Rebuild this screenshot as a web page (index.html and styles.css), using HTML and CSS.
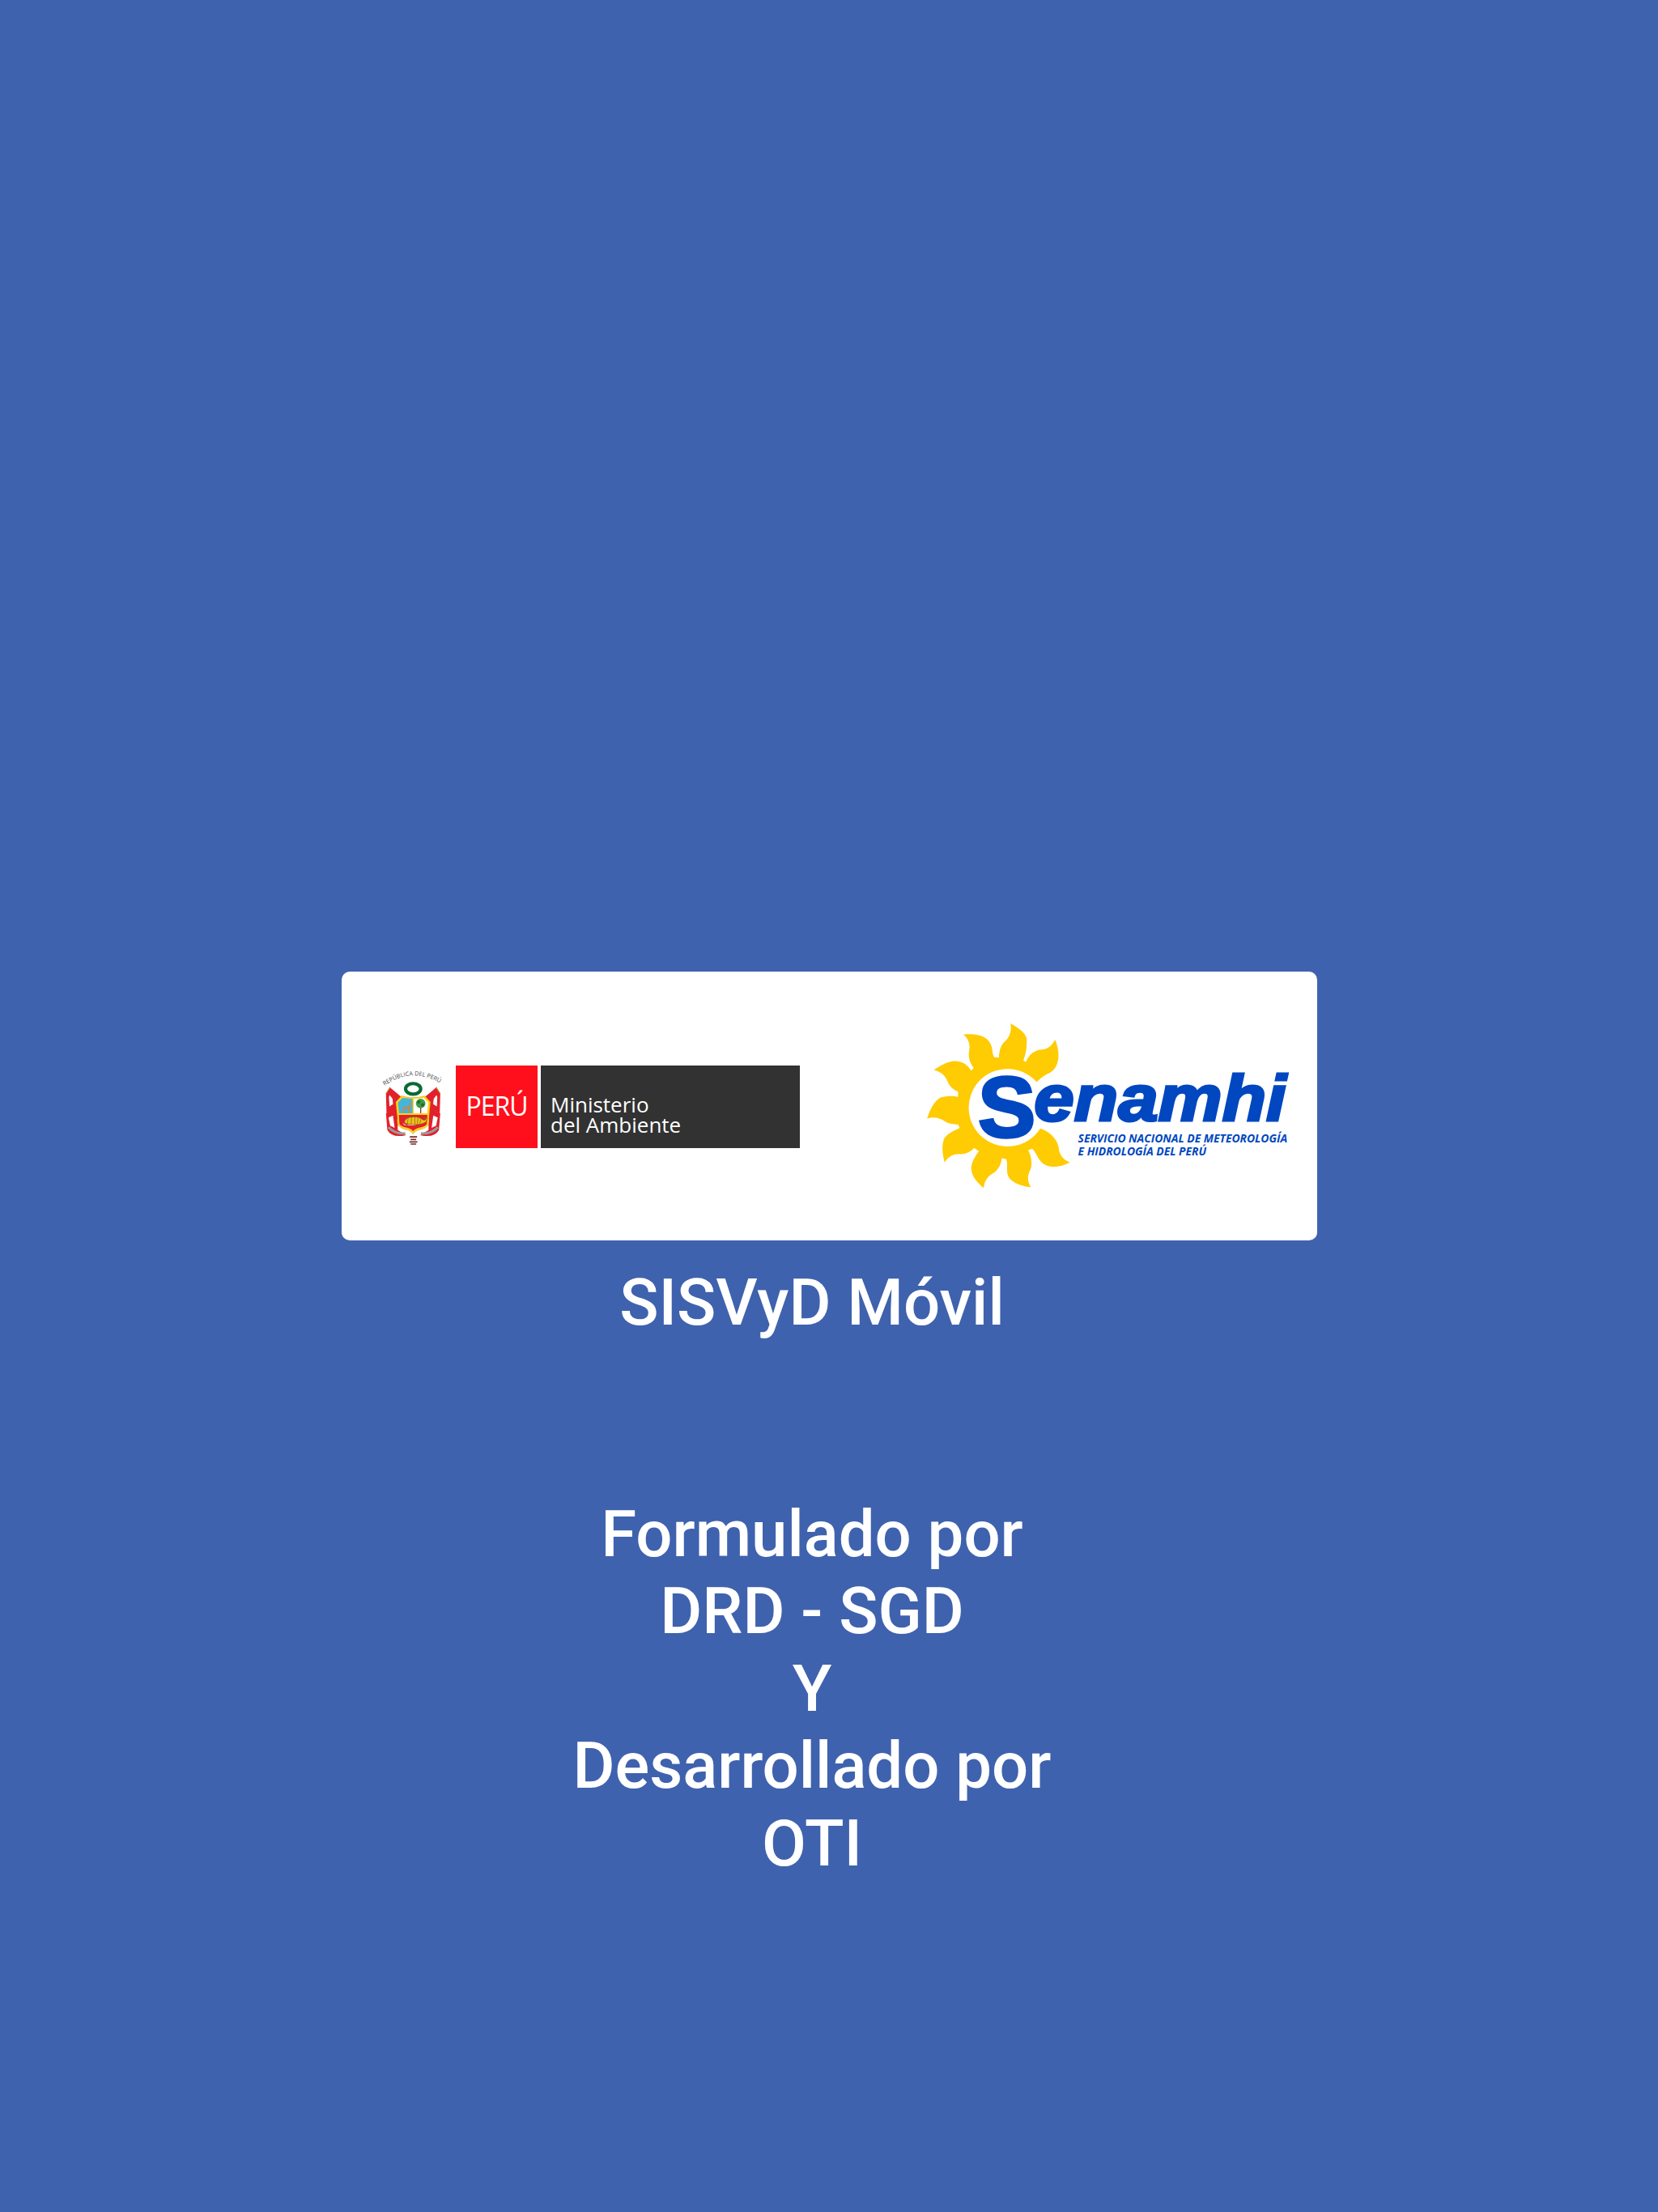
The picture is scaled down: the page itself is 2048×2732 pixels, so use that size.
FILE: index.html
```html
<!DOCTYPE html>
<html lang="es">
<head>
    <meta charset="UTF-8">
    <title>SISVyD Móvil</title>

    <link rel="stylesheet" href="styles.css">
</head>
<body>
<main class="screen">
    <section class="banner">
        <div class="minam">
            <svg class="escudo" viewBox="22 8 260 318">
                <defs>
                    <path id="arco" d="M48 92 Q150 18 262 92"/>
                </defs>
                <text class="escudo-text"><textPath href="#arco">REPÚBLICA DEL PERÚ</textPath></text>
                <!-- banderas -->
                <path fill="#e2202c" d="M68 98 L112 135 L100 170 L55 190 L53 120Z"/>
                <path fill="#e2202c" d="M232 98 L188 135 L200 170 L245 190 L247 120Z"/>
                <path fill="#fff" stroke="#e2202c" stroke-width="3" d="M66 122 L78 138 L80 158 L64 168 L62 132Z"/>
                <path fill="#fff" stroke="#e2202c" stroke-width="3" d="M234 122 L222 138 L220 158 L236 168 L238 132Z"/>
                <path fill="#e2202c" d="M53 190 L95 170 L95 250 L125 268 Q75 280 58 250Z"/>
                <path fill="#e2202c" d="M247 190 L205 170 L205 250 L175 268 Q225 280 242 250Z"/>
                <path fill="#fff" d="M62 205 L78 198 L84 242 L68 234Z"/>
                <path fill="#fff" d="M238 205 L222 198 L216 242 L232 234Z"/>
                <path fill="none" stroke="#9a9a9a" stroke-width="9" d="M62 240 Q85 265 122 262"/>
                <path fill="none" stroke="#9a9a9a" stroke-width="9" d="M238 240 Q215 265 178 262"/>
                <path stroke="#b8962a" stroke-width="3" d="M68 96 L53 120M232 96 L247 120"/>
                <!-- laurel -->
                <ellipse cx="150" cy="103" rx="27" ry="19" fill="#fff" stroke="#0b6b33" stroke-width="12"/>
                <!-- escudo -->
                <path fill="#ffd21a" stroke="#b8860b" stroke-width="1" d="M108 128 Q150 140 192 128 L212 150 L206 210 Q212 240 178 248 Q160 250 150 264 Q140 250 122 248 Q88 240 94 210 L88 150Z"/>
                <path fill="#45b5dc" d="M112 135 L148 139 L148 190 L100 190 L96 152Z"/>
                <path fill="#fff" d="M188 135 L152 139 L152 190 L200 190 L204 152Z"/>
                <path fill="#e2202c" d="M99 196 L201 196 L199 225 Q200 236 176 241 Q160 243 150 254 Q140 243 124 241 Q100 236 101 225Z"/>
                <!-- vicuna -->
                <path fill="#c98a4a" d="M140 148 L146 146 L144 152 L140 170 L136 188 L132 188 L131 174 L120 174 L117 188 L113 188 L114 168 L134 166Z"/>
                <!-- quina -->
                <path fill="#7a4a22" d="M175 160 h4 v30 h-4z"/>
                <circle cx="177" cy="155" r="17" fill="#3d9a45"/>
                <circle cx="170" cy="150" r="6" fill="#1f6e2c"/>
                <circle cx="184" cy="160" r="6" fill="#1f6e2c"/>
                <!-- cornucopia -->
                <path fill="#fff" d="M112 224 Q130 240 165 230 L118 232Z"/>
                <path fill="#f2c11a" stroke="#7a5a10" stroke-width="2" d="M118 222 Q122 204 150 203 Q172 202 186 214 Q196 216 196 208 Q190 204 187 208 L198 206 Q202 222 186 226 Q170 232 140 230 Q125 230 118 222Z"/>
                <path fill="none" stroke="#7a5a10" stroke-width="2" d="M132 206 l-2 22M144 204 l-1 25M156 204 l0 25M167 207 l-2 20M177 212 l-3 14"/>
                <!-- cinta -->
                <path fill="#7c2b2b" d="M138 272 h26 v5 h-26z M141 281 h20 v5 h-20z M137 290 h28 v5 h-28z M141 298 h20 v4 h-20z"/>
            </svg>
            <div class="peru">PERÚ</div>
            <div class="ministerio">Ministerio<br>del Ambiente</div>
        </div>
        <svg class="senamhi" viewBox="60 210 1360 640">
            <path fill="#ffcb02" fill-rule="evenodd" d="M482 440
                C500 420 515 412 530 405 C560 392 575 340 550 282
                C535 310 520 318 495 320 C465 325 450 345 442 365 L432 360
                C440 340 445 320 445 280 C440 255 415 240 385 222
                C390 260 375 280 360 292 C345 310 342 330 342 348 L325 348
                C318 340 318 325 315 310 C305 270 265 258 210 263
                C235 285 235 310 230 330 C228 355 238 375 248 387 L238 397
                C225 375 205 362 175 362 C145 365 125 380 100 395
                C130 402 145 420 152 440 C160 458 175 470 190 475 L190 495
                C175 490 150 490 125 497 C100 510 85 545 75 575
                C100 568 120 572 140 585 C155 595 175 597 190 597 L196 610
                C170 622 150 630 138 650 C128 680 132 705 140 738
                C155 712 180 705 200 707 C222 707 240 695 250 684 L267 697
                C250 720 235 745 240 770 C245 795 265 815 285 833
                C288 805 300 790 320 778 C340 765 350 745 352 722 L368 725
                C375 735 370 760 373 780 C380 810 420 825 460 830
                C445 805 448 785 458 765 C467 745 462 715 450 692 L465 687
                C480 700 485 725 505 742 C530 762 570 755 605 738
                C575 725 565 705 563 680 C555 645 525 622 495 612
                A144 144 0 1 1 482 440Z"/>
            <text class="senamhi-s" x="264" y="642" textLength="214" lengthAdjust="spacingAndGlyphs">S</text>
            <text class="senamhi-name" x="472" y="582" textLength="936" lengthAdjust="spacingAndGlyphs">enamhi</text>
            <text class="senamhi-sub" x="635" y="663" textLength="777" lengthAdjust="spacingAndGlyphs">SERVICIO NACIONAL DE METEOROLOGÍA</text>
            <text class="senamhi-sub" x="635" y="711" textLength="476" lengthAdjust="spacingAndGlyphs">E HIDROLOGÍA DEL PERÚ</text>
        </svg>
    </section>
    <section class="credits">
        <h1>SISVyD Móvil</h1>
        <p>Formulado por<br>DRD - SGD<br>Y<br>Desarrollado por<br>OTI</p>
    </section>
</main>
</body>
</html>
```

FILE: styles.css
```css
html, body {
    margin: 0;
    padding: 0;
    background: #3f62ae;
}

.screen {
    height: 2732px;
    padding-top: 1200px;
    box-sizing: border-box;
    font-family: Roboto, sans-serif;
}

.banner {
    display: flex;
    align-items: center;
    justify-content: space-between;
    box-sizing: border-box;
    width: 1205px;
    height: 332px;
    margin-left: 422px;
    padding: 1px 34px 0 44px;
    background: #fff;
    border-radius: 10px;
}

.minam {
    display: flex;
    align-items: center;
}

.escudo {
    width: 90px;
    height: 110px;
    margin-right: 7px;
}

.escudo-text {
    font-family: "Open Sans", sans-serif;
    font-size: 21px;
    fill: #444;
}

.peru {
    display: flex;
    align-items: flex-end;
    justify-content: center;
    box-sizing: border-box;
    width: 101px;
    height: 102px;
    margin-right: 4px;
    padding-bottom: 36px;
    background: #ff0f1c;
    color: #fff;
    font-family: "Open Sans", sans-serif;
    font-size: 32px;
    letter-spacing: -1px;
    line-height: 1;
}

.ministerio {
    box-sizing: border-box;
    width: 320px;
    height: 102px;
    padding: 36px 0 0 12px;
    background: #323232;
    color: #fff;
    font-family: "Open Sans", sans-serif;
    font-size: 26px;
    line-height: 25px;
}

.senamhi {
    width: 453px;
    height: 213px;
}

.senamhi-s {
    font-family: "Liberation Sans", sans-serif;
    font-size: 315px;
    font-weight: 700;
    fill: #0047c0;
    stroke: #0047c0;
    stroke-width: 10px;
}

.senamhi-name {
    font-family: "Liberation Sans", sans-serif;
    font-size: 240px;
    font-weight: 700;
    font-style: italic;
    fill: #0047c0;
    stroke: #0047c0;
    stroke-width: 9px;
}

.senamhi-sub {
    font-family: "Open Sans", sans-serif;
    font-size: 43px;
    font-weight: 700;
    font-style: italic;
    fill: #0047c0;
}

.credits {
    padding-right: 42px;
    color: #fff;
    text-align: center;
    font-size: 79.7px;
    font-weight: 500;
    line-height: 95.5px;
}

.credits h1 {
    margin: 29px 0 190px;
    font-size: inherit;
    font-weight: inherit;
}

.credits p {
    margin: 0;
}
```
